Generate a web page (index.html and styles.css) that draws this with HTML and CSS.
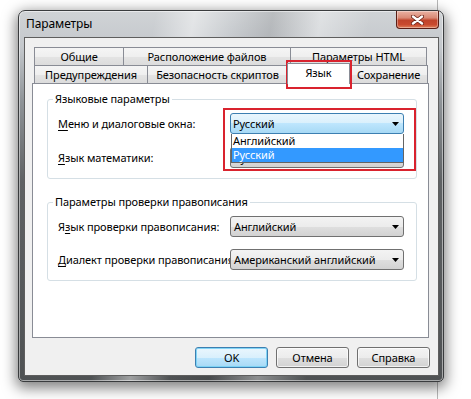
FILE: index.html
```html
<!DOCTYPE html>
<html lang="ru">
<head>
<meta charset="utf-8">
<title>Параметры</title>
<link rel="stylesheet" href="styles.css">
</head>
<body>
<div class="page">
  <div class="window">
    <div class="titlebar">
      <span class="title">Параметры</span>
      <div class="close"><svg width="13" height="10" viewBox="0 0 13 10"><path d="M2 1.5 L11 8.5 M11 1.5 L2 8.5" stroke="#6b2418" stroke-width="4" stroke-linecap="round"/><path d="M2 1.5 L11 8.5 M11 1.5 L2 8.5" stroke="#fff" stroke-width="2.4" stroke-linecap="round"/></svg></div>
    </div>
    <div class="client">
      <div class="tabs">
        <div class="tab-row">
          <div class="tab t-general">Общие</div>
          <div class="tab t-files">Расположение файлов</div>
          <div class="tab t-html">Параметры HTML</div>
        </div>
        <div class="tab-row">
          <div class="tab t-warn">Предупреждения</div>
          <div class="tab t-sec">Безопасность скриптов</div>
          <div class="tab t-lang selected">Язык</div>
          <div class="tab t-save">Сохранение</div>
        </div>
      </div>
      <div class="panel">
        <fieldset class="group">
          <legend>Языковые параметры</legend>
          <div class="rows">
            <span class="lbl"><u>М</u>еню и диалоговые окна:</span>
            <div class="combo-wrap">
              <div class="combo focus"><span>Русский</span><svg class="arrow" width="7" height="4" viewBox="0 0 7 4"><path d="M0 0H7L3.5 4Z" fill="#000"/></svg></div>
              <ul class="list">
                <li>Английский</li>
                <li class="hl">Русский</li>
              </ul>
            </div>
            <span class="lbl"><u>Я</u>зык математики:</span>
            <div class="combo"><span>Русский</span><svg class="arrow" width="7" height="4" viewBox="0 0 7 4"><path d="M0 0H7L3.5 4Z" fill="#000"/></svg></div>
          </div>
        </fieldset>
        <fieldset class="group second">
          <legend>Параметры проверки правописания</legend>
          <div class="rows tight">
            <span class="lbl">Я<u>з</u>ык проверки правописания:</span>
            <div class="combo"><span>Английский</span><svg class="arrow" width="7" height="4" viewBox="0 0 7 4"><path d="M0 0H7L3.5 4Z" fill="#000"/></svg></div>
            <span class="lbl"><u>Д</u>иалект проверки правописания:</span>
            <div class="combo"><span>Американский английский</span><svg class="arrow" width="7" height="4" viewBox="0 0 7 4"><path d="M0 0H7L3.5 4Z" fill="#000"/></svg></div>
          </div>
        </fieldset>
      </div>
      <div class="buttons">
        <div class="btn default">OK</div>
        <div class="btn">Отмена</div>
        <div class="btn">Справка</div>
      </div>
    </div>
  </div>
  <div class="mark mark-tab"></div>
  <div class="mark mark-combo"></div>
</div>
</body>
</html>
```

FILE: styles.css
```css
* { box-sizing: border-box; }
html, body { margin: 0; padding: 0; }
body {
  width: 471px;
  height: 399px;
  overflow: hidden;
  background: #fff linear-gradient(to right, transparent 437px, #b8b8b8 437px, #b8b8b8 438px, transparent 438px);
  font-family: "Noto Sans", "Open Sans", sans-serif;
  font-size: 11px;
  letter-spacing: -0.1px;
  line-height: 15px;
  color: #000;
}
.page {
  position: relative;
  height: 399px;
  padding: 10px 0 0 18px;
}
.window {
  width: 426px;
  height: 372px;
  border: 1px solid #3a3c3e;
  border-radius: 7px 7px 5px 5px;
  padding: 0 4px 5px 5px;
  background:
    linear-gradient(100deg, rgba(255,255,255,0) 28%, rgba(255,255,255,.45) 36%, rgba(255,255,255,0) 44%, rgba(0,0,0,.10) 52%, rgba(255,255,255,.35) 62%, rgba(255,255,255,0) 72%),
    linear-gradient(to bottom, #d0d3d6 0, #c4c8cc 36px, #8f9498 90px, #5f6264 170px, #4f5254 100%);
  box-shadow: 0 4px 14px 2px rgba(0,0,0,.5), inset 0 0 0 1px rgba(255,255,255,.5);
}
.titlebar {
  height: 26px;
  display: flex;
  justify-content: space-between;
  align-items: flex-start;
}
.title {
  padding: 5px 0 0 2px;
  line-height: 16px;
  font-size: 12px;
  color: #000;
}
.close {
  width: 43px;
  height: 18px;
  border: 1px solid #5a1d14;
  border-top: 0;
  border-radius: 0 0 4px 4px;
  background: linear-gradient(#eab2a3 0%, #d98a76 40%, #c0432a 55%, #c94a2e 80%, #e0805a 100%);
  box-shadow: inset 0 0 0 1px rgba(255,255,255,.35);
  display: flex;
  align-items: center;
  justify-content: center;
}
.client {
  height: 339px;
  border: 1px solid #5e5e5e;
  background: #f0f0f0;
  padding: 9px 9px 0 7px;
}
.tabs { margin-left: 2px; }
.tab-row {
  display: flex;
  align-items: flex-start;
  height: 18px;
}
.tab {
  height: 18px;
  margin-right: -1px;
  border: 1px solid #898c95;
  border-bottom: 0;
  background: linear-gradient(#f5f5f5 0%, #efefef 50%, #e4e4e4 50%, #dcdcdc 100%);
  text-align: center;
  line-height: 17px;
  white-space: nowrap;
}
.t-general { width: 90px; }
.t-files { width: 168px; }
.t-html { width: 137px; }
.t-warn { width: 114px; }
.t-sec { width: 141px; }
.t-lang { width: 63px; }
.t-save { width: 79px; }
.tab.selected {
  position: relative;
  z-index: 1;
  height: 21px;
  margin-top: -2px;
  background: #fff;
  line-height: 18px;
}
.panel {
  height: 255px;
  border: 1px solid #898c95;
  background: #fff;
  padding: 7px 11px 0 14px;
}
.group {
  margin: 0;
  border: 1px solid #d5dfe5;
  border-radius: 3px;
  padding: 6px 12px 10px 10px;
  min-width: 0;
}
.group.second { margin-top: 15px; }
.group legend {
  margin-left: -5px;
  padding: 0 2px;
  line-height: 16px;
}
.rows {
  display: grid;
  grid-template-columns: minmax(0, 1fr) 174px;
  row-gap: 13px;
  align-items: center;
}
.rows.tight { row-gap: 12px; }
.lbl { white-space: nowrap; }
.lbl u { text-decoration-thickness: 1px; text-underline-offset: 2px; }
.combo-wrap { position: relative; height: 21px; }
.combo {
  position: relative;
  height: 21px;
  border: 1px solid #707070;
  border-radius: 3px;
  padding: 0 4px 0 3px;
  background: linear-gradient(#f3f3f3 0%, #ececec 50%, #dfdfdf 50%, #d2d2d2 100%);
  display: flex;
  align-items: center;
  justify-content: space-between;
  white-space: nowrap;
}
.combo.focus {
  border-color: #3c7fb1;
  padding-left: 2px;
  background: linear-gradient(#eaf6fd 0%, #d9f0fc 50%, #bee6fd 50%, #a7d9f5 100%);
}
.arrow { flex: none; margin-top: 1px; }
.list {
  position: absolute;
  z-index: 2;
  left: 1px;
  right: 0;
  top: 21px;
  margin: 0;
  padding: 0;
  list-style: none;
  background: #fff;
  border: 1px solid #646464;
  border-top: 0;
}
.list li {
  height: 14px;
  line-height: 14px;
  padding-left: 1px;
}
.list li.hl {
  background: #3399ff;
  color: #fff;
}
.buttons {
  display: flex;
  justify-content: flex-end;
  gap: 8px;
  margin: 9px -1px 0 0;
}
.btn {
  width: 73px;
  height: 21px;
  border: 1px solid #707070;
  border-radius: 3px;
  background: linear-gradient(#f3f3f3 0%, #ececec 50%, #dfdfdf 50%, #d2d2d2 100%);
  box-shadow: inset 0 0 0 1px rgba(255,255,255,.7);
  text-align: center;
  line-height: 19px;
}
.btn.default {
  border-color: #3c7fb1;
  background: linear-gradient(#eaf6fd 0%, #d9f0fc 50%, #bee6fd 50%, #a7d9f5 100%);
  box-shadow: inset 0 0 0 1px rgba(120,210,245,.9);
}
.mark {
  position: absolute;
  border: 2px solid #d9232e;
}
.mark-tab { left: 286px; top: 60px; width: 66px; height: 29px; }
.mark-combo { left: 223px; top: 108px; width: 193px; height: 63px; }
```
